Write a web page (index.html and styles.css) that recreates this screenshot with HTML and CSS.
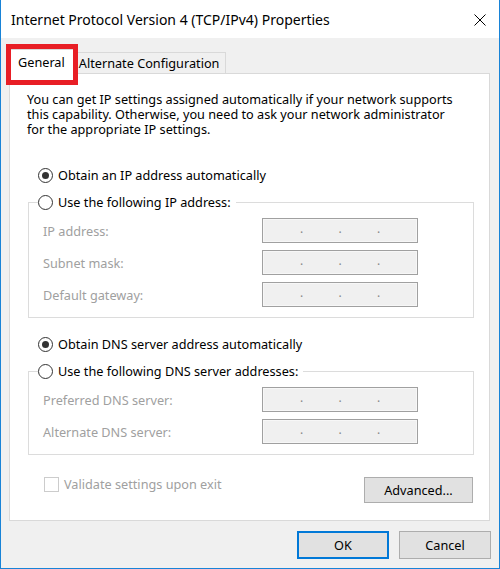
FILE: index.html
```html
<!DOCTYPE html>
<html>
<head>
  <title>Internet Protocol Version 4 (TCP/IPv4) Properties</title>
  <link rel="stylesheet" href="styles.css">
</head>
<body>

<div class="window">
  <div class="titlebar">
    <span class="title">Internet Protocol Version 4 (TCP/IPv4) Properties</span>
    <svg class="close" width="12" height="12" viewBox="0 0 12 12">
      <path d="M0.5 0.5 L11.5 11.5 M11.5 0.5 L0.5 11.5" stroke="#000" stroke-width="1" fill="none"/>
    </svg>
  </div>

  <div class="tabs">
    <div class="tab active">General<span class="highlight"></span></div>
    <div class="tab">Alternate Configuration</div>
  </div>

  <div class="panel">
    <div class="intro">
      <div>You can get IP settings assigned automatically if your network supports</div>
      <div>this capability. Otherwise, you need to ask your network administrator</div>
      <div>for the appropriate IP settings.</div>
    </div>

    <div class="radio first"><span class="dot checked"></span>Obtain an IP address automatically</div>

    <fieldset class="group">
      <legend class="radio"><span class="dot"></span>Use the following IP address:</legend>
      <div class="row"><span class="label">IP address:</span><div class="ip"><span></span><i>.</i><span></span><i>.</i><span></span><i>.</i><span></span></div></div>
      <div class="row"><span class="label">Subnet mask:</span><div class="ip"><span></span><i>.</i><span></span><i>.</i><span></span><i>.</i><span></span></div></div>
      <div class="row"><span class="label">Default gateway:</span><div class="ip"><span></span><i>.</i><span></span><i>.</i><span></span><i>.</i><span></span></div></div>
    </fieldset>

    <div class="radio second"><span class="dot checked"></span>Obtain DNS server address automatically</div>

    <fieldset class="group">
      <legend class="radio"><span class="dot"></span>Use the following DNS server addresses:</legend>
      <div class="row"><span class="label">Preferred DNS server:</span><div class="ip"><span></span><i>.</i><span></span><i>.</i><span></span><i>.</i><span></span></div></div>
      <div class="row"><span class="label">Alternate DNS server:</span><div class="ip"><span></span><i>.</i><span></span><i>.</i><span></span><i>.</i><span></span></div></div>
    </fieldset>

    <div class="bottom">
      <label class="check"><span class="box"></span>Validate settings upon exit</label>
      <button class="btn advanced">Advanced...</button>
    </div>
  </div>

  <div class="actions">
    <button class="btn default">OK</button>
    <button class="btn">Cancel</button>
  </div>
</div>

</body>
</html>
```

FILE: styles.css
```css
* {
  box-sizing: border-box;
}
body {
  margin: 0;
  font-family: "Noto Sans", "Open Sans", sans-serif;
  font-size: 12.7px;
  color: #000;
}
.window {
  width: 500px;
  height: 569px;
  background: #f0f0f0;
  border: 1px solid #1883d7;
  border-top: none;
}
.titlebar {
  height: 38px;
  background: #fff;
  display: flex;
  align-items: center;
  justify-content: space-between;
  padding: 0 13px 0 10px;
}
.title {
  font-size: 14px;
}
.close {
  margin-top: 1px;
}
.tabs {
  display: flex;
  align-items: flex-end;
  margin: 11px 0 0 8px;
}
.tab {
  height: 21px;
  line-height: 20px;
  padding: 0 6px 0 3px;
  border: 1px solid #d9d9d9;
  border-bottom: none;
  border-left: none;
  background: #f0f0f0;
}
.tab.active {
  position: relative;
  z-index: 1;
  height: 25px;
  margin-bottom: -1px;
  line-height: 25px;
  padding: 0 10px 0 8px;
  border-left: 1px solid #d9d9d9;
  background: #fff;
}
.highlight {
  position: absolute;
  left: -4px;
  top: -6px;
  width: 72px;
  height: 41px;
  border: 5px solid #e81e25;
}
.panel {
  width: 481px;
  height: 448px;
  margin-left: 8px;
  background: #fff;
  border: 1px solid #d9d9d9;
  padding: 18px 15px 0 18px;
}
.intro {
  margin-left: -1px;
  white-space: nowrap;
}
.intro div {
  height: 15px;
  line-height: 15px;
}
.radio {
  display: flex;
  align-items: center;
  height: 16px;
}
.radio.first {
  margin: 30px 0 0 10px;
}
.radio.second {
  margin: 18px 0 0 10px;
}
.dot {
  width: 15px;
  height: 15px;
  border: 1px solid #333;
  border-radius: 50%;
  margin-right: 5px;
  position: relative;
  background: #fff;
}
.dot.checked::after {
  content: "";
  position: absolute;
  left: 3px;
  top: 3px;
  width: 7px;
  height: 7px;
  border-radius: 50%;
  background: #333;
}
.group {
  margin: 11px 0 0 0;
  padding: 8px 0 10px 14px;
  border: 1px solid #dcdcdc;
}
.group legend {
  margin-left: -5px;
  padding: 0 5px 0 0;
}
.row {
  display: flex;
  align-items: center;
  height: 25px;
}
.row + .row {
  margin-top: 7px;
}
.label {
  width: 219px;
  color: #a0a0a0;
}
.ip {
  width: 156px;
  height: 25px;
  display: flex;
  background: #f0f0f0;
  border: 1px solid #a0a0a0;
  box-shadow: inset 0 0 0 1px #f7f7f7;
  color: #888;
}
.ip span {
  flex: 1;
}
.ip i {
  font-style: normal;
  width: 0;
  display: flex;
  justify-content: center;
  line-height: 20px;
  font-size: 12px;
}
.bottom {
  display: flex;
  justify-content: space-between;
  align-items: center;
  margin-top: 22px;
  height: 26px;
}
.check {
  display: flex;
  align-items: center;
  color: #a0a0a0;
  margin-left: 16px;
  margin-top: -12px;
}
.box {
  width: 15px;
  height: 15px;
  border: 1px solid #cccccc;
  margin-right: 5px;
}
.btn {
  font-family: inherit;
  font-size: 12.7px;
  background: #e1e1e1;
  border: 1px solid #adadad;
  color: #000;
  padding: 0;
}
.advanced {
  width: 109px;
  height: 26px;
  margin-right: 1px;
}
.actions {
  display: flex;
  justify-content: flex-end;
  gap: 10px;
  margin-top: 10px;
  padding-right: 8px;
}
.actions .btn {
  width: 92px;
  height: 28px;
}
.btn.default {
  border: 2px solid #0078d7;
}
```
